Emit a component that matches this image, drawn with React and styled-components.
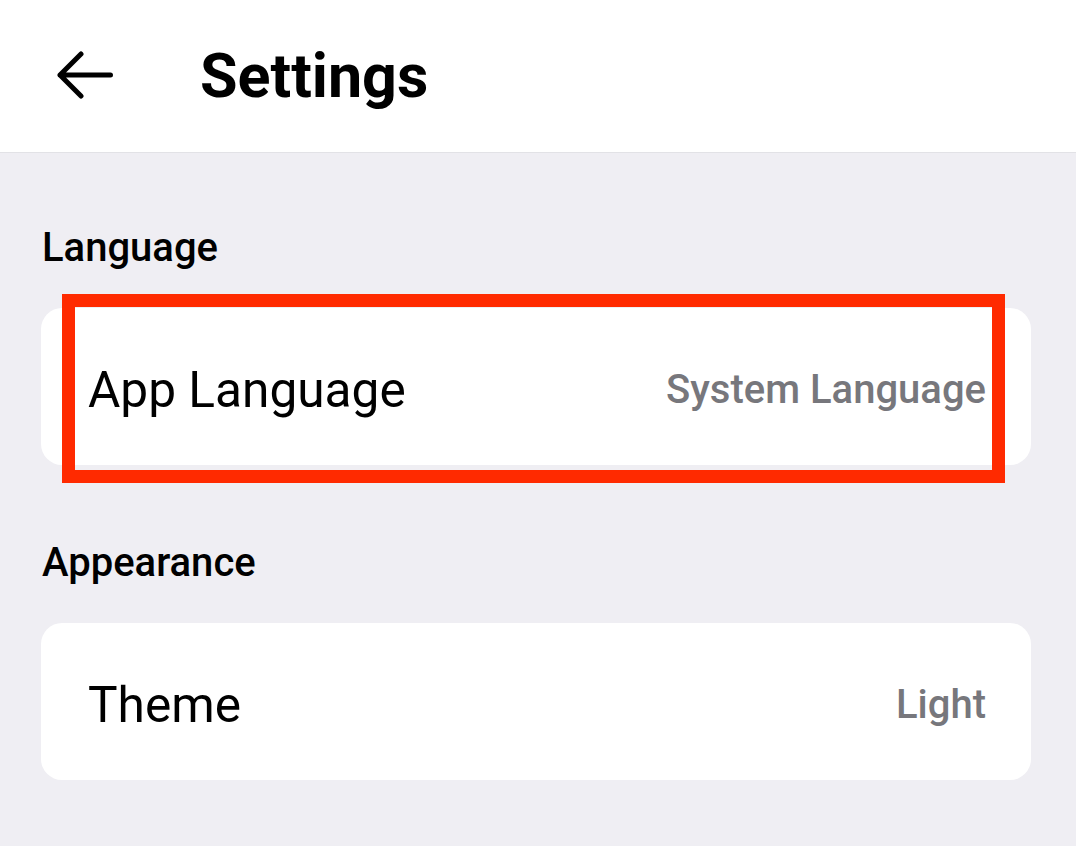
import React from 'react';
import styled, { createGlobalStyle } from "styled-components";

const GlobalStyle = createGlobalStyle`
    html, body {
        margin: 0;
        padding: 0;
        background: #efeef3;
        font-family: Roboto, "Liberation Sans", sans-serif;
        -webkit-font-smoothing: antialiased;
    }
`;

const Page = styled.div`
    min-height: 846px;
    background: #efeef3;
`;

const Header = styled.header`
    display: flex;
    align-items: center;
    height: 152px;
    padding-left: 57px;
    background: #ffffff;
    border-bottom: 1px solid #e2e2e6;
`;

const BackButton = styled.button`
    display: flex;
    align-items: center;
    padding: 0;
    margin-top: -3px;
    border: none;
    background: transparent;
    cursor: pointer;
`;

const Title = styled.h1`
    margin: 0 0 0 87px;
    font-size: 61px;
    font-weight: 700;
    color: #000;
`;

const Content = styled.main`
    display: flex;
    flex-direction: column;
    gap: 74px;
    padding: 71px 45px 0 41px;
`;

const Section = styled.section`
    display: flex;
    flex-direction: column;
`;

const SectionLabel = styled.h2`
    margin: 0 0 37px 1px;
    font-size: 40px;
    font-weight: 500;
    line-height: normal;
    color: #000;
`;

const Card = styled.div`
    position: relative;
    display: flex;
    align-items: center;
    justify-content: space-between;
    height: 157px;
    padding: 6px 45px 0 47px;
    box-sizing: border-box;
    background: #ffffff;
    border-radius: 21px;
`;

const RowTitle = styled.span`
    font-size: 49.6px;
    font-weight: 400;
    color: #000;
`;

const RowValue = styled.span`
    font-size: 40px;
    font-weight: 500;
    color: #77777c;
`;

const Highlight = styled.div`
    position: absolute;
    left: 21px;
    top: -14px;
    width: 943px;
    height: 189px;
    box-sizing: border-box;
    border: 13px solid #ff2a00;
    pointer-events: none;
`;

const BackArrow = () => (
    <svg width="56" height="48" viewBox="0 0 56 48" fill="none">
        <path d="M53.5 24H3M24 3L3 24L24 45" stroke="#000" strokeWidth="5" strokeLinecap="round" strokeLinejoin="round" />
    </svg>
);

const SettingRow = ({ title, value, highlighted }) => (
    <Card>
        <RowTitle>{title}</RowTitle>
        <RowValue>{value}</RowValue>
        {highlighted && <Highlight />}
    </Card>
);

const App = () => {
    return (
        <>
            <GlobalStyle />
            <Page>
                <Header>
                    <BackButton aria-label="Back">
                        <BackArrow />
                    </BackButton>
                    <Title>Settings</Title>
                </Header>
                <Content>
                    <Section>
                        <SectionLabel>Language</SectionLabel>
                        <SettingRow title="App Language" value="System Language" highlighted />
                    </Section>
                    <Section>
                        <SectionLabel>Appearance</SectionLabel>
                        <SettingRow title="Theme" value="Light" />
                    </Section>
                </Content>
            </Page>
        </>
    )
}

export default App
